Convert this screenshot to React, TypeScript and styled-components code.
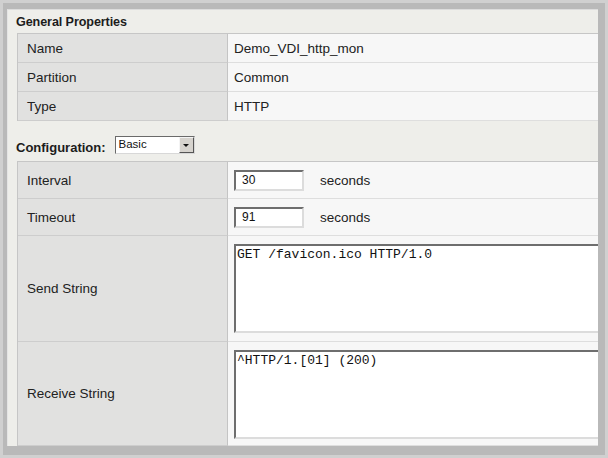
import React from "react";
import styled, { createGlobalStyle } from "styled-components";

const Global = createGlobalStyle`
  html, body { margin: 0; padding: 0; background: #ffffff; }
  body { font-family: "Liberation Sans", Arial, sans-serif; }
`;

const Frame = styled.div`
  width: 608px;
  height: 458px;
  box-sizing: border-box;
  padding: 9px 10px 12px 7px;
  background: #b9b9b9;
  box-shadow: inset 0 0 0 3px #d0d0d0;
  display: flex;
`;

const Panel = styled.div`
  flex: 1;
  overflow: hidden;
  background: #eeeeea;
  border-top: 1px solid #dcdcdc;
  border-left: 1px solid #e4e4e4;
  display: flex;
  flex-direction: column;
`;

const SectionTitle = styled.div`
  height: 24px;
  display: flex;
  align-items: center;
  padding-left: 8px;
  font-weight: bold;
  font-size: 12.6px;
  color: #1c1c1c;
  letter-spacing: -0.1px;
`;

const ConfigBar = styled.div`
  height: 41px;
  box-sizing: border-box;
  display: flex;
  align-items: flex-end;
  gap: 9px;
  padding: 0 0 7px 8px;
`;

const ConfigLabel = styled.span`
  font-weight: bold;
  font-size: 13px;
  color: #1c1c1c;
  line-height: 16px;
  margin-bottom: -2px;
`;

const Select = styled.div`
  width: 80px;
  height: 18px;
  box-sizing: border-box;
  background: #ffffff;
  border: 1px solid;
  border-color: #6a6a6a #d8d8d8 #d8d8d8 #6a6a6a;
  display: flex;
  align-items: stretch;
`;

const SelectText = styled.span`
  flex: 1;
  font-size: 11.5px;
  line-height: 15px;
  padding-left: 3px;
  color: #111;
`;

const SelectButton = styled.span`
  width: 15px;
  background: #d6d3ce;
  border: 1px solid;
  border-color: #f4f4f4 #555 #555 #f4f4f4;
  box-sizing: border-box;
  display: flex;
  align-items: center;
  justify-content: center;
`;

const Arrow = styled.span`
  width: 0;
  height: 0;
  border-left: 3px solid transparent;
  border-right: 3px solid transparent;
  border-top: 3px solid #111;
`;

const Table = styled.div`
  margin-left: 9px;
  width: 640px;
  display: grid;
  grid-template-columns: 210px 1fr;
  border-top: 1px solid #c6c6c6;
  border-left: 1px solid #c6c6c6;
`;

const LabelCell = styled.div<{ $h: number }>`
  height: ${(p) => p.$h}px;
  box-sizing: border-box;
  background: #e1e1e0;
  border-bottom: 1px solid #cdcdcd;
  border-right: 1px solid #c4c4c4;
  display: flex;
  align-items: center;
  padding-left: 9px;
  font-size: 13.5px;
  color: #222;
`;

const ValueCell = styled.div<{ $h: number }>`
  height: ${(p) => p.$h}px;
  box-sizing: border-box;
  background: #f7f7f7;
  border-bottom: 1px solid #dedede;
  display: flex;
  align-items: center;
  padding-left: 6px;
  font-size: 13.5px;
  color: #222;
`;

const TopValueCell = styled(ValueCell)`
  align-items: flex-start;
  padding-top: 8px;
`;

const TextInput = styled.div`
  width: 70px;
  height: 21px;
  box-sizing: border-box;
  background: #ffffff;
  border: 2px solid;
  border-color: #6e6e6e #dcdcdc #dcdcdc #6e6e6e;
  font-size: 12px;
  line-height: 17px;
  padding-left: 6px;
  color: #111;
`;

const Unit = styled.span`
  margin-left: 16px;
  font-size: 13.5px;
  color: #222;
`;

const TextArea = styled.div<{ $h: number }>`
  width: 420px;
  height: ${(p) => p.$h}px;
  box-sizing: border-box;
  background: #ffffff;
  border: 2px solid;
  border-color: #6e6e6e #dcdcdc #dcdcdc #6e6e6e;
  font-family: "Liberation Mono", "Courier New", monospace;
  font-size: 13px;
  line-height: 16px;
  padding: 1px 0 0 1px;
  color: #111;
  white-space: pre;
`;

const props: [string, string][] = [
  ["Name", "Demo_VDI_http_mon"],
  ["Partition", "Common"],
  ["Type", "HTTP"],
];

export default function App() {
  return (
    <>
      <Global />
      <Frame>
        <Panel>
          <SectionTitle>General Properties</SectionTitle>
          <Table>
            {props.map(([k, v]) => (
              <React.Fragment key={k}>
                <LabelCell $h={29}>{k}</LabelCell>
                <ValueCell $h={29}>{v}</ValueCell>
              </React.Fragment>
            ))}
          </Table>
          <ConfigBar>
            <ConfigLabel>Configuration:</ConfigLabel>
            <Select>
              <SelectText>Basic</SelectText>
              <SelectButton>
                <Arrow />
              </SelectButton>
            </Select>
          </ConfigBar>
          <Table>
            <LabelCell $h={37}>Interval</LabelCell>
            <ValueCell $h={37}>
              <TextInput>30</TextInput>
              <Unit>seconds</Unit>
            </ValueCell>
            <LabelCell $h={37}>Timeout</LabelCell>
            <ValueCell $h={37}>
              <TextInput>91</TextInput>
              <Unit>seconds</Unit>
            </ValueCell>
            <LabelCell $h={106}>Send String</LabelCell>
            <TopValueCell $h={106}>
              <TextArea $h={89}>GET /favicon.ico HTTP/1.0</TextArea>
            </TopValueCell>
            <LabelCell $h={104}>Receive String</LabelCell>
            <TopValueCell $h={104}>
              <TextArea $h={89}>^HTTP/1.[01] (200)</TextArea>
            </TopValueCell>
          </Table>
        </Panel>
      </Frame>
    </>
  );
}
